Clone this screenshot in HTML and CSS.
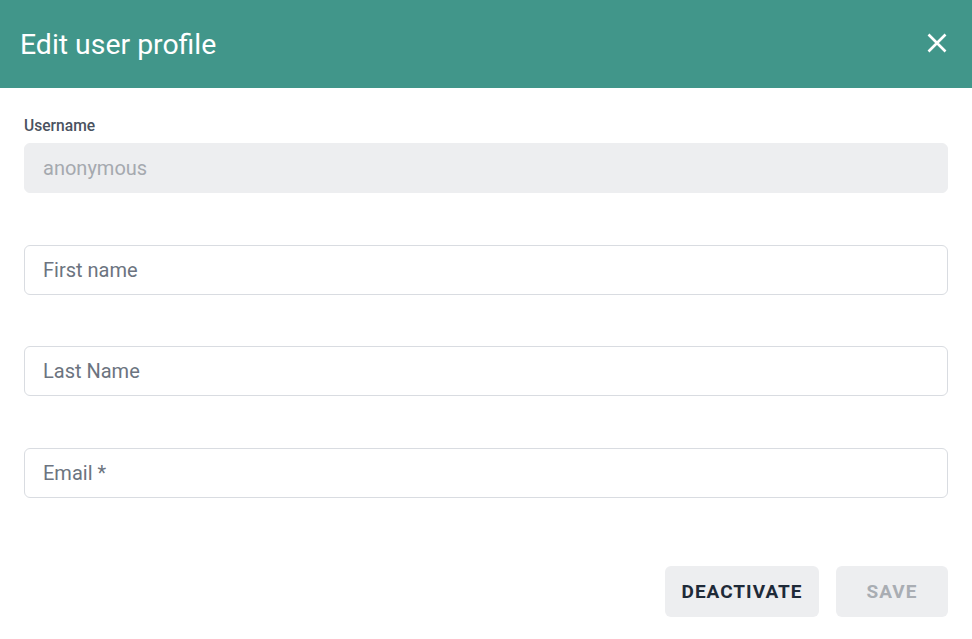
FILE: index.html
```html
<!DOCTYPE html>
<html>
<head>
<meta charset="utf-8">
<link rel="stylesheet" href="styles.css">
</head>
<body>
<div class="dialog">
  <header class="header">
    <h1 class="title">Edit user profile</h1>
    <button class="close" aria-label="Close">
      <svg width="20" height="20" viewBox="0 0 20 20"><path d="M1.5 1.5L18.5 18.5M18.5 1.5L1.5 18.5" stroke="#fff" stroke-width="2.6" stroke-linecap="butt" fill="none"/></svg>
    </button>
  </header>
  <main class="body">
    <div class="field">
      <label class="label">Username</label>
      <div class="input disabled">anonymous</div>
    </div>
    <div class="input">First name</div>
    <div class="input">Last Name</div>
    <div class="input">Email *</div>
    <div class="actions">
      <button class="btn deactivate">DEACTIVATE</button>
      <button class="btn save">SAVE</button>
    </div>
  </main>
</div>
</body>
</html>
```
FILE: styles.css
```css
* { box-sizing: border-box; }
html, body { margin: 0; padding: 0; background: #fff; }
body { font-family: Roboto, "Noto Sans", sans-serif; }
.dialog { width: 972px; height: 639px; overflow: hidden; }
.header {
  height: 88px;
  background: #41968a;
  display: flex;
  align-items: center;
  justify-content: space-between;
  padding: 0 25px 0 20px;
}
.title { margin: 0; color: #fff; font-size: 28.4px; font-weight: 400; }
.close { background: none; border: 0; padding: 0; width: 20px; height: 20px; display: flex; margin-top: -2px; }
.body { padding: 0 24px; display: flex; flex-direction: column; }
.field { display: flex; flex-direction: column; padding-top: 29px; }
.label { font-size: 15.6px; color: #4a5260; font-weight: 500; height: 26px; line-height: 19px; }
.input {
  height: 50px;
  border: 1px solid #d9dce1;
  border-radius: 6px;
  padding: 0 18px;
  display: flex;
  align-items: center;
  font-size: 20px;
  color: #6c7480;
  margin-top: 51.6px;
}
.field .input { margin-top: 0; }
.input.disabled { background: #edeef0; border-color: #edeef0; color: #a5a9af; }
.actions { display: flex; justify-content: flex-end; gap: 17px; margin-top: 68px; }
.btn {
  height: 51px;
  border: 0;
  border-radius: 6px;
  background: #edeef0;
  font-family: Roboto, "Noto Sans", sans-serif;
  font-weight: 700;
  font-size: 19px;
  letter-spacing: 1px;
  padding: 0;
  display: flex;
  align-items: center;
  justify-content: center;
}
.deactivate { color: #1e2a38; width: 154px; }
.save { color: #a9adb3; width: 112px; }
```
